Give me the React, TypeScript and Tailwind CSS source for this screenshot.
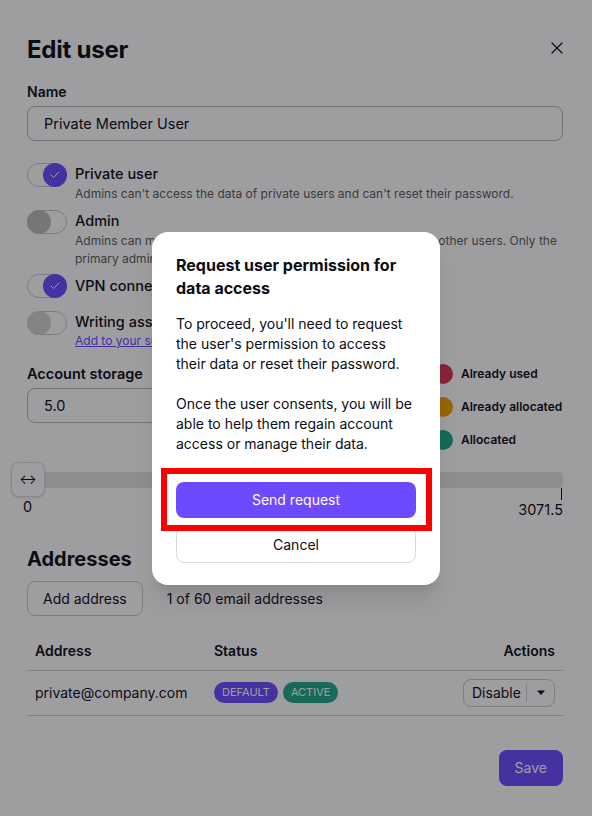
import { Check, X } from "lucide-react";

type ToggleProps = { on?: boolean; disabled?: boolean };

function Toggle({ on, disabled }: ToggleProps) {
  return (
    <span
      className={`relative flex h-6 w-10 shrink-0 items-center rounded-full border border-[#c9c7c5] ${
        on ? "justify-end" : "justify-start"
      }`}
    >
      <span
        className={`-m-px flex h-6 w-6 items-center justify-center rounded-full ${
          on ? "bg-[#6d4aff]" : disabled ? "bg-[#d4d3d1]" : "bg-[#bdbbb9]"
        }`}
      >
        {on && <Check className="h-3 w-3 text-white" strokeWidth={2} />}
      </span>
    </span>
  );
}

function Dot({ color }: { color: string }) {
  return <span className={`h-5 w-5 shrink-0 rounded-full ${color}`} />;
}

export default function App() {
  return (
    <div className="relative h-[816px] w-full overflow-hidden bg-white font-['Inter',sans-serif] text-[#0c0c14]">
      {/* Edit user page */}
      <div className="pt-[34px] pr-[29px] pl-[27px]">
        <div className="flex items-start justify-between">
          <h1 className="text-2xl leading-8 font-bold tracking-[-0.01em]">Edit user</h1>
          <X className="mt-[4px] mr-[-4px] h-5 w-5 text-[#0c0c14]" strokeWidth={1.5} />
        </div>

        <label className="mt-4 block text-sm leading-5 font-semibold">Name</label>
        <div className="mt-1 flex h-[35px] items-center rounded-lg border border-[#b7b5b3] px-4 text-[14.5px]">
          Private Member User
        </div>

        <div className="mt-[22px] flex gap-2">
          <Toggle on />
          <div>
            <div className="text-[14.5px] leading-[22px] font-medium">Private user</div>
            <div className="text-[12px] leading-[18px] text-[#5c5a58]">
              Admins can't access the data of private users and can't reset their password.
            </div>
          </div>
        </div>

        <div className="mt-[7px] flex gap-2">
          <Toggle />
          <div>
            <div className="text-[14.5px] leading-[22px] font-medium">Admin</div>
            <div className="text-[12px] leading-[18px] text-[#5c5a58]">
              Admins can manage users, addresses, and security settings for other users. Only the
              primary admin can manage other admins.
            </div>
          </div>
        </div>

        <div className="mt-[6px] flex gap-2">
          <Toggle on />
          <div className="text-[14.5px] leading-[24px] font-medium">VPN connections</div>
        </div>

        <div className="mt-[13px] flex gap-2">
          <Toggle disabled />
          <div>
            <div className="text-[14.5px] leading-[22px] font-medium">Writing assistant</div>
            <a className="block text-[12px] leading-4 text-[#6d4aff] underline">
              Add to your subscription
            </a>
          </div>
        </div>

        <div className="mt-[15px] flex gap-4">
          <div className="flex-1">
            <div className="text-[14.5px] leading-5 font-semibold">Account storage</div>
            <div className="mt-1 flex h-[35px] items-center rounded-lg border border-[#b7b5b3] px-4 text-[14.5px]">
              5.0
            </div>
          </div>
          <div className="flex w-[130px] flex-col gap-[13px] whitespace-nowrap">
            <div className="flex items-center gap-2 text-[12px] leading-5 font-semibold">
              <Dot color="bg-[#dc3251]" />
              Already used
            </div>
            <div className="flex items-center gap-2 text-[12px] leading-5 font-semibold">
              <Dot color="bg-[#f5a100]" />
              Already allocated
            </div>
            <div className="flex items-center gap-2 text-[12px] leading-5 font-semibold">
              <Dot color="bg-[#1ea885]" />
              Allocated
            </div>
          </div>
        </div>

        {/* slider */}
        <div className="mt-[22px]">
          <div className="relative h-4 rounded-sm bg-[#e5e4e2]">
            <div className="absolute top-[-10px] left-[-16px] flex h-[35px] w-[34px] items-center justify-center rounded-lg border border-[#dcdad8] bg-white text-[13px] shadow-sm">
              ↔
            </div>
          </div>
          <div className="flex justify-between">
            <div className="flex flex-col items-start">
              <span className="h-[9px] w-px bg-[#0c0c14]" />
              <span className="-ml-[4px] text-[14.5px] leading-5">0</span>
            </div>
            <div className="flex flex-col items-end">
              <span className="mr-px h-[12px] w-px bg-[#0c0c14]" />
              <span className="text-[14.5px] leading-5">3071.5</span>
            </div>
          </div>
        </div>

        <h2 className="mt-[25px] text-xl leading-7 font-bold">Addresses</h2>
        <div className="mt-[8px] flex items-center gap-[24px]">
          <button className="h-[35px] rounded-lg border border-[#c9c7c5] px-[15px] text-[14px]">
            Add address
          </button>
          <span className="text-[14px]">1 of 60 email addresses</span>
        </div>

        <table className="mt-[15px] w-full text-left text-[14px]">
          <thead>
            <tr className="border-b border-[#d1cfcd]">
              <th className="h-[39px] px-2 font-semibold">Address</th>
              <th className="px-2 font-semibold">Status</th>
              <th className="px-2 text-right font-semibold">Actions</th>
            </tr>
          </thead>
          <tbody>
            <tr className="border-b border-[#d1cfcd]">
              <td className="h-[45px] w-[179px] px-2">private@company.com</td>
              <td className="px-2">
                <div className="flex gap-[5px]">
                  <span className="rounded-full bg-[#6d4aff] px-[8px] py-[3px] text-[11px] leading-[15px] text-white">
                    DEFAULT
                  </span>
                  <span className="rounded-full bg-[#1ea885] px-[8px] py-[3px] text-[11px] leading-[15px] text-white">
                    ACTIVE
                  </span>
                </div>
              </td>
              <td className="px-2">
                <div className="ml-auto flex h-[28px] w-[92px] items-center rounded-lg border border-[#c9c7c5]">
                  <span className="flex-1 pl-2 text-[14px]">Disable</span>
                  <span className="h-[18px] w-px bg-[#d1cfcd]" />
                  <span className="flex w-[27px] justify-center">
                    <svg width="10" height="6" viewBox="0 0 10 6">
                      <path d="M1 0.5h8L5 5z" fill="#0c0c14" />
                    </svg>
                  </span>
                </div>
              </td>
            </tr>
          </tbody>
        </table>

        <div className="mt-[34px] flex justify-end">
          <button className="h-9 rounded-lg bg-[#6d4aff] px-4 text-[14px] text-white">Save</button>
        </div>
      </div>

      {/* backdrop */}
      <div className="absolute inset-0 bg-[#0c0c14]/40" />

      {/* permission modal */}
      <div className="absolute inset-0 flex items-center justify-center">
        <div className="w-[288px] rounded-[16px] bg-white px-6 pt-[22px] pb-[22px] shadow-xl">
          <h3 className="text-[16px] leading-[23px] font-bold">
            Request user permission for data access
          </h3>
          <p className="mt-[14px] text-[14px] leading-5 text-[#0c0c14]">
            To proceed, you'll need to request the user's permission to access their data or reset
            their password.
            <br />
            <br />
            Once the user consents, you will be able to help them regain account access or manage
            their data.
          </p>
          <div className="mt-[28px] flex flex-col gap-[9px]">
            <div className="relative">
              <button className="h-9 w-full rounded-lg bg-[#6d4aff] text-[14px] text-white">
                Send request
              </button>
              <span className="pointer-events-none absolute -top-[14px] -right-[16px] -bottom-[13px] -left-[15px] z-10 border-[6px] border-[#ff0000]" />
            </div>
            <button className="h-9 w-full rounded-lg border border-[#dcdad8] text-[14px]">
              Cancel
            </button>
          </div>
        </div>
      </div>
    </div>
  );
}
